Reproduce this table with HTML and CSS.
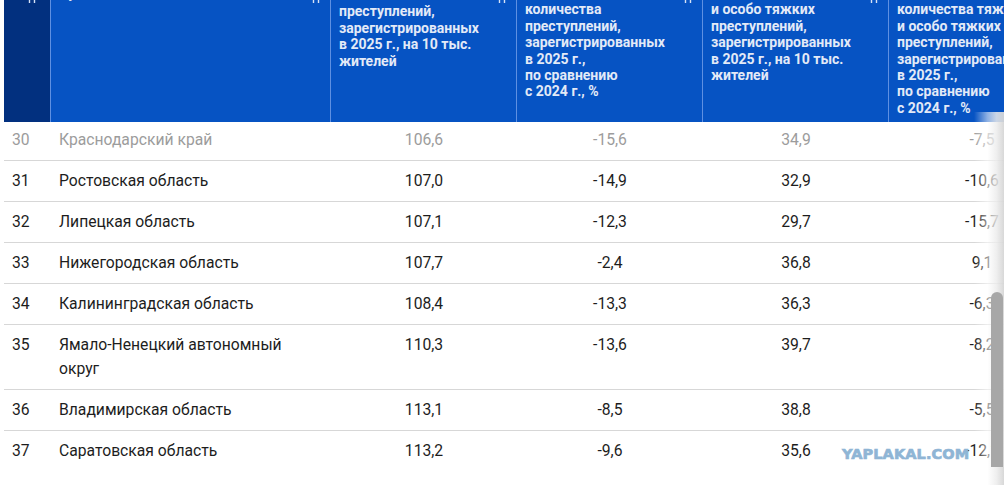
FILE: index.html
```html
<!DOCTYPE html>
<html lang="ru">
<head>
<meta charset="utf-8">
<title>Рейтинг регионов</title>
<link rel="stylesheet" href="styles.css">
</head>
<body>
<div class="viewport">
  <div class="table">
    <div class="row head">
      <div class="hcell first-col">№<svg class="sort" viewBox="0 0 8 12"><path d="M1.5 0V12M6.5 0V12"/></svg></div>
      <div class="hcell">Субъект РФ<svg class="sort" viewBox="0 0 8 12"><path d="M1.5 0V12M6.5 0V12"/></svg></div>
      <div class="hcell lower">Число<br>преступлений,<br>зарегистрированных<br>в 2025 г., на 10 тыс.<br>жителей<svg class="sort" viewBox="0 0 8 12"><path d="M1.5 0V12M6.5 0V12"/></svg></div>
      <div class="hcell">Изменение<br>количества<br>преступлений,<br>зарегистрированных<br>в 2025 г.,<br>по сравнению<br>с 2024 г., %<svg class="sort" viewBox="0 0 8 12"><path d="M1.5 0V12M6.5 0V12"/></svg></div>
      <div class="hcell">Число тяжких<br>и особо тяжких<br>преступлений,<br>зарегистрированных<br>в 2025 г., на 10 тыс.<br>жителей<svg class="sort" viewBox="0 0 8 12"><path d="M1.5 0V12M6.5 0V12"/></svg></div>
      <div class="hcell last">Изменение<br>количества тяжких<br>и особо тяжких<br>преступлений,<br>зарегистрированных<br>в 2025 г.,<br>по сравнению<br>с 2024 г., %</div>
    </div>

    <div class="row body faded">
      <div class="cell">30</div><div class="cell name">Краснодарский край</div>
      <div class="cell num">106,6</div><div class="cell num">-15,6</div><div class="cell num">34,9</div><div class="cell num">-7,5</div>
    </div>
    <div class="row body">
      <div class="cell">31</div><div class="cell name">Ростовская область</div>
      <div class="cell num">107,0</div><div class="cell num">-14,9</div><div class="cell num">32,9</div><div class="cell num">-10,6</div>
    </div>
    <div class="row body">
      <div class="cell">32</div><div class="cell name">Липецкая область</div>
      <div class="cell num">107,1</div><div class="cell num">-12,3</div><div class="cell num">29,7</div><div class="cell num">-15,7</div>
    </div>
    <div class="row body">
      <div class="cell">33</div><div class="cell name">Нижегородская область</div>
      <div class="cell num">107,7</div><div class="cell num">-2,4</div><div class="cell num">36,8</div><div class="cell num">9,1</div>
    </div>
    <div class="row body">
      <div class="cell">34</div><div class="cell name">Калининградская область</div>
      <div class="cell num">108,4</div><div class="cell num">-13,3</div><div class="cell num">36,3</div><div class="cell num">-6,3</div>
    </div>
    <div class="row body">
      <div class="cell">35</div><div class="cell name">Ямало-Ненецкий автономный округ</div>
      <div class="cell num">110,3</div><div class="cell num">-13,6</div><div class="cell num">39,7</div><div class="cell num">-8,2</div>
    </div>
    <div class="row body">
      <div class="cell">36</div><div class="cell name">Владимирская область</div>
      <div class="cell num">113,1</div><div class="cell num">-8,5</div><div class="cell num">38,8</div><div class="cell num">-5,5</div>
    </div>
    <div class="row body">
      <div class="cell">37</div><div class="cell name">Саратовская область</div>
      <div class="cell num">113,2</div><div class="cell num">-9,6</div><div class="cell num">35,6</div><div class="cell num">-12,1</div>
    </div>
  </div>

  <div class="edge-fade"></div>
  <div class="scrollbar"></div>
  <div class="watermark">YAPLAKAL.COM</div>
</div>
</body>
</html>
```

FILE: styles.css
```css
html, body {
  margin: 0;
  padding: 0;
  background: #ffffff;
}

.viewport {
  position: relative;
  width: 1004px;
  height: 485px;
  overflow: hidden;
  background: #ffffff;
  font-family: Roboto, "Liberation Sans", sans-serif;
}

.table {
  margin-left: 4px;
  margin-top: -23px;
  width: max-content;
}

.row {
  display: grid;
  grid-template-columns: 47px 280px 186px 186px 186px 186px;
}

.hcell {
  position: relative;
  box-sizing: border-box;
  height: 145px;
  padding: 8px 8px 0 8px;
  background: #0653c3;
  border-right: 1px solid #5e90e2;
  color: #e3eaf7;
  font-weight: 700;
  font-size: 14px;
  line-height: 16.4px;
  white-space: nowrap;
  overflow: hidden;
}

.hcell.first-col {
  background: #02307f;
  color: #02307f;
}

.hcell.lower {
  padding-top: 10px;
}

.hcell.last {
  border-right: none;
}

.sort {
  position: absolute;
  top: 14px;
  right: 10px;
  width: 8px;
  height: 12px;
  fill: none;
  stroke: #d6e2f6;
  stroke-width: 1.4;
}

.first-col .sort {
  right: 14px;
}

.row.body {
  border-top: 1px solid #d7d7d7;
}

.row.body.faded {
  border-top: none;
}

.cell {
  padding: 8px 8px;
  font-size: 15.7px;
  line-height: 24px;
  color: #1d1d1d;
}

.faded .cell {
  padding-top: 6px;
  color: #9c9c9c;
}

.cell.name {
  padding-right: 30px;
}

.cell.num {
  text-align: center;
}

.edge-fade {
  position: absolute;
  top: 112px;
  right: 0;
  width: 30px;
  height: 373px;
  background: linear-gradient(to right,
    rgba(255, 255, 255, 0) 0%,
    rgba(255, 255, 255, 0.55) 45%,
    rgba(236, 236, 236, 0.85) 75%,
    rgba(214, 214, 214, 0.95) 100%);
}

.scrollbar {
  position: absolute;
  top: 292px;
  right: 1px;
  width: 12px;
  height: 175px;
  background: #a7a7a7;
  border-radius: 6px 6px 0 0;
}

.watermark {
  position: absolute;
  left: 842px;
  top: 445px;
  font-family: "DejaVu Sans", "Liberation Sans", sans-serif;
  font-weight: 700;
  font-size: 14.5px;
  letter-spacing: 0.1px;
  color: #8fb5d5;
  -webkit-text-stroke: 0.7px #8fb5d5;
  line-height: 18px;
}
```
